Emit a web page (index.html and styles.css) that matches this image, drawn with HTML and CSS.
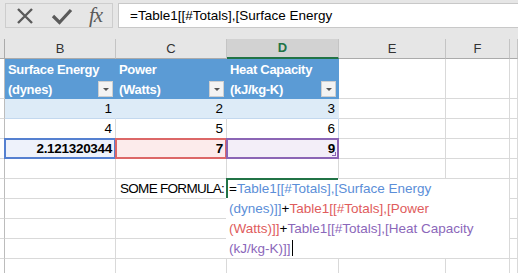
FILE: index.html
```html
<!DOCTYPE html>
<html>
<head>
<meta charset="utf-8">
<link rel="stylesheet" href="styles.css">
</head>
<body>
<div class="app">
  <div class="fbar">
    <div class="fbtns">
      <svg class="ico" width="20" height="20" viewBox="0 0 20 20"><path d="M3 3 L17 17 M17 3 L3 17" stroke="#5a5a5a" stroke-width="2.4" fill="none"/></svg>
      <svg class="ico chk" width="22" height="20" viewBox="0 0 22 20"><path d="M2 10 L8.5 16.5 L20 4" stroke="#5a5a5a" stroke-width="3.2" fill="none"/></svg>
      <span class="fx">fx</span>
    </div>
    <div class="finput">=Table1[[#Totals],[Surface Energy</div>
  </div>

  <div class="sheet">
    <!-- column headers -->
    <div class="c hd stub"></div>
    <div class="c hd">B</div>
    <div class="c hd">C</div>
    <div class="c hd sel">D</div>
    <div class="c hd">E</div>
    <div class="c hd">F</div>
    <div class="c hd"></div>

    <!-- table header -->
    <div class="c stub"></div>
    <div class="c th">Surface Energy<br>(dynes)<span class="flt"></span></div>
    <div class="c th">Power<br>(Watts)<span class="flt"></span></div>
    <div class="c th">Heat Capacity<br>(kJ/kg-K)<span class="flt"></span></div>
    <div class="c"></div><div class="c"></div><div class="c"></div>

    <!-- row 1 -->
    <div class="c stub"></div>
    <div class="c band num">1</div>
    <div class="c band num">2</div>
    <div class="c band num">3</div>
    <div class="c"></div><div class="c"></div><div class="c"></div>

    <!-- row 2 -->
    <div class="c stub"></div>
    <div class="c num">4</div>
    <div class="c num">5</div>
    <div class="c num tblr">6</div>
    <div class="c"></div><div class="c"></div><div class="c"></div>

    <!-- totals -->
    <div class="c stub"></div>
    <div class="c num tot hb">2.121320344</div>
    <div class="c num tot hr">7</div>
    <div class="c num tot hp">9<span class="handle"></span></div>
    <div class="c"></div><div class="c"></div><div class="c"></div>

    <!-- empty -->
    <div class="c stub"></div>
    <div class="c"></div><div class="c"></div><div class="c"></div>
    <div class="c"></div><div class="c"></div><div class="c"></div>

    <!-- formula row -->
    <div class="c stub"></div>
    <div class="c"></div>
    <div class="c label">SOME FORMULA:</div>
    <div class="c"></div>
    <div class="c"></div><div class="c"></div><div class="c"></div>

    <div class="c stub"></div>
    <div class="c"></div><div class="c"></div><div class="c"></div>
    <div class="c"></div><div class="c"></div><div class="c"></div>

    <div class="c stub"></div>
    <div class="c"></div><div class="c"></div><div class="c"></div>
    <div class="c"></div><div class="c"></div><div class="c"></div>

    <div class="c stub"></div>
    <div class="c"></div><div class="c"></div><div class="c"></div>
    <div class="c"></div><div class="c"></div><div class="c"></div>

    <div class="c stub"></div>
    <div class="c"></div><div class="c"></div><div class="c"></div>
    <div class="c"></div><div class="c"></div><div class="c"></div>

    <div class="editor">
      <span class="gtop"></span><span class="gleft"></span>
      <div class="ln">=<span class="fb">Table1[[#Totals],[Surface Energy</span></div>
      <div class="ln"><span class="fb">(dynes)]]</span>+<span class="fr">Table1[[#Totals],[Power</span></div>
      <div class="ln"><span class="fr">(Watts)]]</span>+<span class="fp">Table1[[#Totals],[Heat Capacity</span></div>
      <div class="ln"><span class="fp">(kJ/kg-K)]]</span><span class="caret"></span></div>
    </div>
  </div>
</div>
</body>
</html>
```

FILE: styles.css
```css
html, body {
  margin: 0;
  padding: 0;
  background: #ffffff;
  overflow: hidden;
}
body {
  width: 518px;
  height: 273px;
  font-family: "Liberation Sans", Arial, sans-serif;
  font-size: 13.5px;
  color: #000;
}
.app {
  width: 518px;
  height: 273px;
  overflow: hidden;
}

/* formula bar */
.fbar {
  height: 39px;
  background: #e6e6e6;
  display: flex;
  gap: 5px;
  padding: 3px 0 0 5px;
  box-sizing: border-box;
}
.fbtns {
  width: 108px;
  height: 25px;
  box-sizing: border-box;
  border: 1px solid #cdcdcd;
  display: flex;
  align-items: center;
  padding-left: 9px;
  gap: 0;
}
.ico { display: block; }
.chk { margin-left: 16px; }
.fx {
  font-family: "Liberation Serif", "Times New Roman", serif;
  font-style: italic;
  font-size: 21px;
  color: #5a5a5a;
  margin-left: 16px;
  letter-spacing: -1px;
  line-height: 20px;
  margin-top: -2px;
}
.finput {
  flex: 1;
  height: 25px;
  box-sizing: border-box;
  background: #fff;
  border: 1px solid #c8c8c8;
  border-right: none;
  padding-left: 11px;
  line-height: 23px;
  white-space: nowrap;
}

/* sheet grid */
.sheet {
  position: relative;
  display: grid;
  grid-template-columns: 5px 111px 111px 112px 107px 64px 8px;
  grid-template-rows: 20px 40px repeat(9, 20px);
}
.c {
  box-sizing: border-box;
  border-right: 1px solid #d9d9d9;
  border-bottom: 1px solid #d9d9d9;
  padding: 0 3px;
  line-height: 19px;
  white-space: nowrap;
  overflow: visible;
  position: relative;
}
.stub {
  padding: 0;
  border-right-color: #bcbcbc;
}
.hd {
  background: #e6e6e6;
  border-right-color: #c4c4c4;
  border-bottom-color: #ababab;
  text-align: center;
  color: #333;
  font-size: 13px;
  line-height: 19px;
}
.hd.stub { border-right-color: #ababab; }
.hd.sel {
  background: #d2d2d2;
  color: #217346;
  font-weight: bold;
  border-bottom: 2px solid #217346;
  line-height: 18px;
}
.th {
  background: #5b9bd5;
  border-right-color: #5b9bd5;
  border-bottom-color: #5b9bd5;
  color: #fff;
  font-weight: bold;
  font-size: 13px;
  letter-spacing: -0.3px;
  line-height: 20px;
  padding-top: 1px;
}
.flt {
  position: absolute;
  right: 2px;
  bottom: 1px;
  width: 15px;
  height: 16px;
  box-sizing: border-box;
  background: #f3f3f3;
  border: 1px solid #cfcfcf;
}
.flt::after {
  content: "";
  position: absolute;
  left: 4px;
  top: 6px;
  border-left: 3px solid transparent;
  border-right: 3px solid transparent;
  border-top: 3px solid #555;
}
.band {
  background: #ddebf7;
  border-right-color: #ddebf7;
  border-bottom-color: #c3d8ee;
}
.tblr { border-right-color: #c3d8ee; }
.num { text-align: right; }
.tot {
  font-weight: bold;
  letter-spacing: -0.3px;
  border-right-color: transparent;
  border-bottom-color: transparent;
}
.tot::after {
  content: "";
  position: absolute;
  left: -1px;
  top: -1px;
  right: -1px;
  bottom: -1px;
  border: 2px solid;
  box-sizing: border-box;
  pointer-events: none;
}
.hb { background: #eef2fb; }
.hb::after { border-color: #5580d0; }
.hr { background: #fcebeb; }
.hr::after { border-color: #dc6767; }
.hp { background: #f3eef8; }
.hp::after { border-color: #8b65b5; }
.handle {
  position: absolute;
  right: 2px;
  bottom: 2px;
  width: 3px;
  height: 3px;
  border-right: 1px solid #8b65b5;
  border-bottom: 1px solid #8b65b5;
}
.label {
  letter-spacing: -0.7px;
  padding-left: 4px;
}

/* in-cell editor */
.editor {
  position: absolute;
  left: 226px;
  top: 140px;
  width: 283px;
  height: 79px;
  background: #fff;
  padding-left: 3px;
  box-sizing: border-box;
}
.gtop {
  position: absolute;
  left: 0;
  top: -1px;
  width: 112px;
  height: 2px;
  background: #217346;
}
.gleft {
  position: absolute;
  left: 0;
  top: -1px;
  width: 2px;
  height: 20px;
  background: #217346;
}
.ln {
  height: 20px;
  line-height: 20px;
  white-space: nowrap;
}
.fb { color: #5b8ed8; }
.fr { color: #e05c5c; }
.fp { color: #8b67ba; }
.caret {
  display: inline-block;
  width: 1px;
  height: 16px;
  background: #000;
  vertical-align: -3px;
  margin-left: 1px;
}
```
